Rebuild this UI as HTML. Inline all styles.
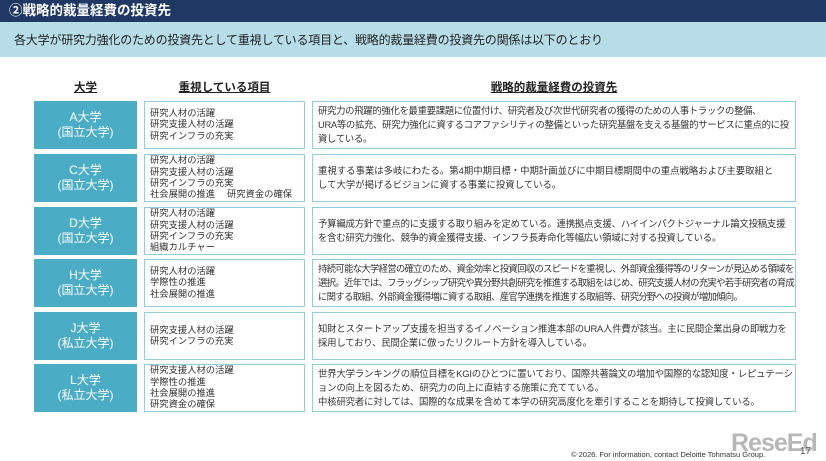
<!DOCTYPE html>
<html><head><meta charset="utf-8"><style>
*{margin:0;padding:0;box-sizing:border-box}
body{width:826px;height:461px;background:#fff;font-family:"Liberation Sans","Noto Sans CJK JP",sans-serif;color:#222;position:relative;overflow:hidden}
.top{position:absolute;left:0;top:0;width:826px;height:22px;background:#1f3864;color:#fff;font-weight:bold;font-size:13.5px;line-height:22px;padding-left:9px}
.band{position:absolute;left:0;top:22px;width:826px;height:35px;background:#b7dee8;font-size:12px;line-height:36px;padding-left:14px;color:#222;letter-spacing:-0.2px}
.h{position:absolute;top:79px;font-weight:bold;font-size:11.5px;text-decoration:underline;text-align:center}
.u{position:absolute;left:34px;width:103px;height:48px;background:#4bacc6;color:#fff;font-size:12px;line-height:15px;text-align:center;display:flex;flex-direction:column;justify-content:center}
.m{position:absolute;left:144px;width:161px;height:48px;border:1.5px solid #92cddc;font-size:9.3px;line-height:11.4px;padding-left:5px;display:flex;flex-direction:column;justify-content:center;color:#333}
.r{position:absolute;left:312px;width:484px;height:48px;border:1.5px solid #92cddc;font-size:9.4px;line-height:14px;padding:0 0 0 5px;display:flex;flex-direction:column;justify-content:center;color:#333;white-space:nowrap;overflow:hidden;letter-spacing:0}
.f{position:absolute;left:571px;top:450px;font-size:7.5px;color:#333}
</style></head><body>
<div class="top">②戦略的裁量経費の投資先</div>
<div class="band">各大学が研究力強化のための投資先として重視している項目と、戦略的裁量経費の投資先の関係は以下のとおり</div>
<div class="h" style="left:34px;width:103px">大学</div>
<div class="h" style="left:144px;width:161px">重視している項目</div>
<div class="h" style="left:312px;width:484px">戦略的裁量経費の投資先</div>

<div class="u" style="top:101px">A大学<br>(国立大学)</div>
<div class="m" style="top:101px">研究人材の活躍<br>研究支援人材の活躍<br>研究インフラの充実</div>
<div class="r" style="top:101px;letter-spacing:-0.32px"><div>研究力の飛躍的強化を最重要課題に位置付け、研究者及び次世代研究者の獲得のための人事トラックの整備、</div><div>URA等の拡充、研究力強化に資するコアファシリティの整備といった研究基盤を支える基盤的サービスに重点的に投</div><div>資している。</div></div>

<div class="u" style="top:154px">C大学<br>(国立大学)</div>
<div class="m" style="top:154px">研究人材の活躍<br>研究支援人材の活躍<br>研究インフラの充実<br>社会展開の推進　 研究資金の確保</div>
<div class="r" style="top:154px"><div>重視する事業は多岐にわたる。第4期中期目標・中期計画並びに中期目標期間中の重点戦略および主要取組と</div><div>して大学が掲げるビジョンに資する事業に投資している。</div></div>

<div class="u" style="top:207px">D大学<br>(国立大学)</div>
<div class="m" style="top:207px">研究人材の活躍<br>研究支援人材の活躍<br>研究インフラの充実<br>組織カルチャー</div>
<div class="r" style="top:207px;letter-spacing:-0.2px"><div>予算編成方針で重点的に支援する取り組みを定めている。連携拠点支援、ハイインパクトジャーナル論文投稿支援</div><div>を含む研究力強化、競争的資金獲得支援、インフラ長寿命化等幅広い領域に対する投資している。</div></div>

<div class="u" style="top:259px">H大学<br>(国立大学)</div>
<div class="m" style="top:259px">研究人材の活躍<br>学際性の推進<br>社会展開の推進</div>
<div class="r" style="top:259px;letter-spacing:-0.72px"><div>持続可能な大学経営の確立のため、資金効率と投資回収のスピードを重視し、外部資金獲得等のリターンが見込める領域を</div><div>選択。近年では、フラッグシップ研究や異分野共創研究を推進する取組をはじめ、研究支援人材の充実や若手研究者の育成</div><div>に関する取組、外部資金獲得増に資する取組、産官学連携を推進する取組等、研究分野への投資が増加傾向。</div></div>

<div class="u" style="top:312px">J大学<br>(私立大学)</div>
<div class="m" style="top:312px">研究支援人材の活躍<br>研究インフラの充実</div>
<div class="r" style="top:312px;letter-spacing:-0.2px"><div>知財とスタートアップ支援を担当するイノベーション推進本部のURA人件費が該当。主に民間企業出身の即戦力を</div><div>採用しており、民間企業に倣ったリクルート方針を導入している。</div></div>

<div class="u" style="top:364px">L大学<br>(私立大学)</div>
<div class="m" style="top:364px">研究支援人材の活躍<br>学際性の推進<br>社会展開の推進<br>研究資金の確保</div>
<div class="r" style="top:364px;letter-spacing:-0.15px"><div>世界大学ランキングの順位目標をKGIのひとつに置いており、国際共著論文の増加や国際的な認知度・レピュテーシ</div><div>ョンの向上を図るため、研究力の向上に直結する施策に充てている。</div><div>中核研究者に対しては、国際的な成果を含めて本学の研究高度化を牽引することを期待して投資している。</div></div>

<div class="f">© 2026. For information, contact Deloitte Tohmatsu Group.</div>
<div style="position:absolute;left:731px;top:429px;font-size:25px;font-weight:bold;color:#9a9a9a;opacity:.7;letter-spacing:-1px">ReseEd</div>
<div style="position:absolute;left:800px;top:446px;font-size:10px;color:#555">17</div>
</body></html>
